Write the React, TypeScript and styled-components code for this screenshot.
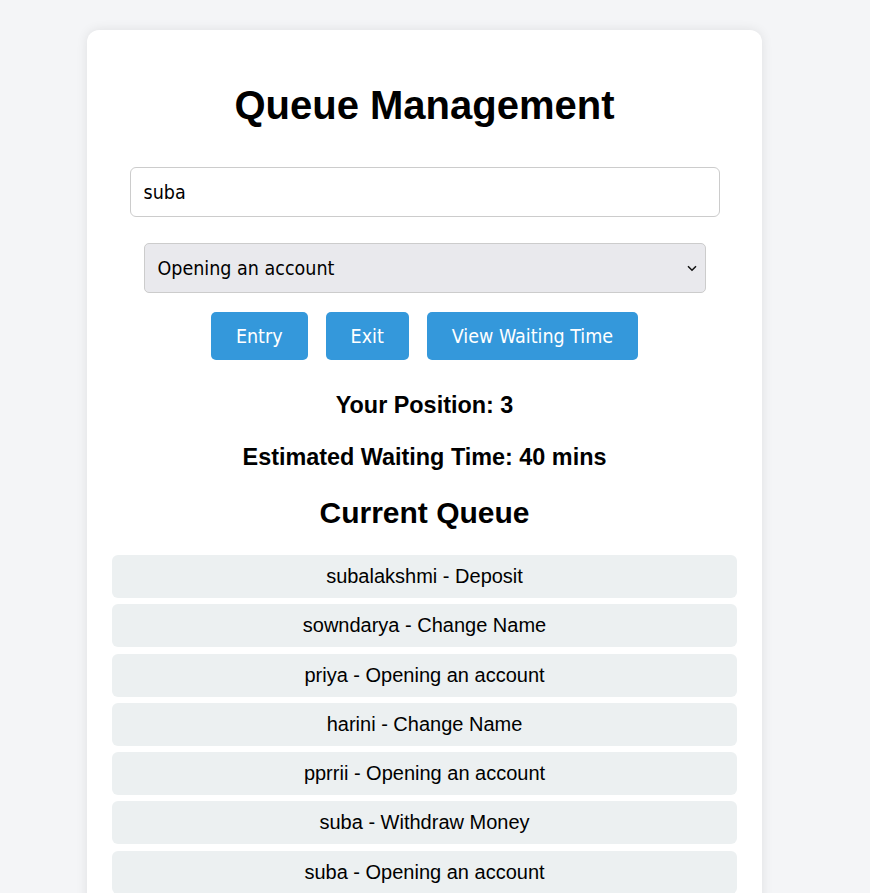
import React, { useState } from "react";
import styled, { createGlobalStyle } from "styled-components";

const GlobalStyle = createGlobalStyle`
  html, body {
    margin: 0;
    padding: 0;
    background: #f4f5f7;
  }
  body {
    font-family: "Liberation Sans", Arial, sans-serif;
    color: #000;
  }
`;

const Page = styled.div`
  display: flex;
  justify-content: center;
  padding: 30px 0 0 0;
  min-height: 863px;
  box-sizing: border-box;
`;

const Card = styled.div`
  width: 675px;
  box-sizing: border-box;
  margin-left: -21px;
  padding: 25px;
  background: #ffffff;
  border-radius: 12px;
  box-shadow: 0 0 12px rgba(0, 0, 0, 0.09);
  display: flex;
  flex-direction: column;
  align-items: center;
`;

const Title = styled.h1`
  font-size: 40px;
  font-weight: 700;
  margin: 27px 0 39px;
  line-height: 46px;
  text-align: center;
`;

const controlFont = `
  font-family: "DejaVu Sans", Tahoma, Verdana, sans-serif;
  font-stretch: condensed;
  font-size: 19.5px;
`;

const NameInput = styled.input`
  ${controlFont}
  width: 590px;
  height: 50px;
  box-sizing: border-box;
  padding: 0 13px;
  border: 1px solid #cccccc;
  border-radius: 6px;
  margin: 0 0 26px;
  color: #000;
  background: #fff;
  outline: none;
`;

const SelectWrap = styled.div`
  position: relative;
  width: 562px;
  margin-bottom: 19px;
`;

const ServiceSelect = styled.select`
  ${controlFont}
  appearance: none;
  -webkit-appearance: none;
  width: 100%;
  height: 50px;
  box-sizing: border-box;
  padding: 0 13px;
  border: 1px solid #cccccc;
  border-radius: 5px;
  background: #e9e9ed;
  color: #000;
  outline: none;
`;

const Chevron = styled.svg`
  position: absolute;
  right: 9px;
  top: 22px;
  width: 10px;
  height: 7px;
  pointer-events: none;
`;

const ButtonRow = styled.div`
  display: flex;
  justify-content: center;
  gap: 18px;
  margin-bottom: 32px;
`;

const ActionButton = styled.button`
  ${controlFont}
  height: 48px;
  padding: 0 25px;
  border: none;
  border-radius: 5px;
  background: #3498db;
  color: #ffffff;
  cursor: pointer;
`;

const Info = styled.h3`
  font-size: 23.4px;
  font-weight: 700;
  line-height: 27px;
  margin: 0 0 25px;
  text-align: center;
`;

const SectionTitle = styled.h2`
  font-size: 30px;
  font-weight: 700;
  line-height: 35px;
  margin: -1px 0 25px;
  text-align: center;
`;

const QueueList = styled.ul`
  list-style: none;
  margin: 0;
  padding: 0;
  width: 100%;
  display: flex;
  flex-direction: column;
  gap: 6.25px;
`;

const QueueItem = styled.li`
  background: #ecf0f1;
  border-radius: 6px;
  padding: 10px;
  font-size: 20px;
  line-height: 23px;
  text-align: center;
`;

const queue = [
  "subalakshmi - Deposit",
  "sowndarya - Change Name",
  "priya - Opening an account",
  "harini - Change Name",
  "pprrii - Opening an account",
  "suba - Withdraw Money",
  "suba - Opening an account",
];

export default function App() {
  const [name, setName] = useState("suba");
  const [service, setService] = useState("Opening an account");
  return (
    <>
      <GlobalStyle />
      <Page>
        <Card>
          <Title>Queue Management</Title>
          <NameInput value={name} onChange={(e) => setName(e.target.value)} />
          <SelectWrap>
            <ServiceSelect value={service} onChange={(e) => setService(e.target.value)}>
              <option>Opening an account</option>
              <option>Deposit</option>
              <option>Withdraw Money</option>
              <option>Change Name</option>
            </ServiceSelect>
            <Chevron viewBox="0 0 10 7">
              <path d="M1 1.2 L5 5.2 L9 1.2" fill="none" stroke="#111" strokeWidth="1.5" />
            </Chevron>
          </SelectWrap>
          <ButtonRow>
            <ActionButton>Entry</ActionButton>
            <ActionButton>Exit</ActionButton>
            <ActionButton>View Waiting Time</ActionButton>
          </ButtonRow>
          <Info>Your Position: 3</Info>
          <Info>Estimated Waiting Time: 40 mins</Info>
          <SectionTitle>Current Queue</SectionTitle>
          <QueueList>
            {queue.map((q, i) => (
              <QueueItem key={i}>{q}</QueueItem>
            ))}
          </QueueList>
        </Card>
      </Page>
    </>
  );
}
